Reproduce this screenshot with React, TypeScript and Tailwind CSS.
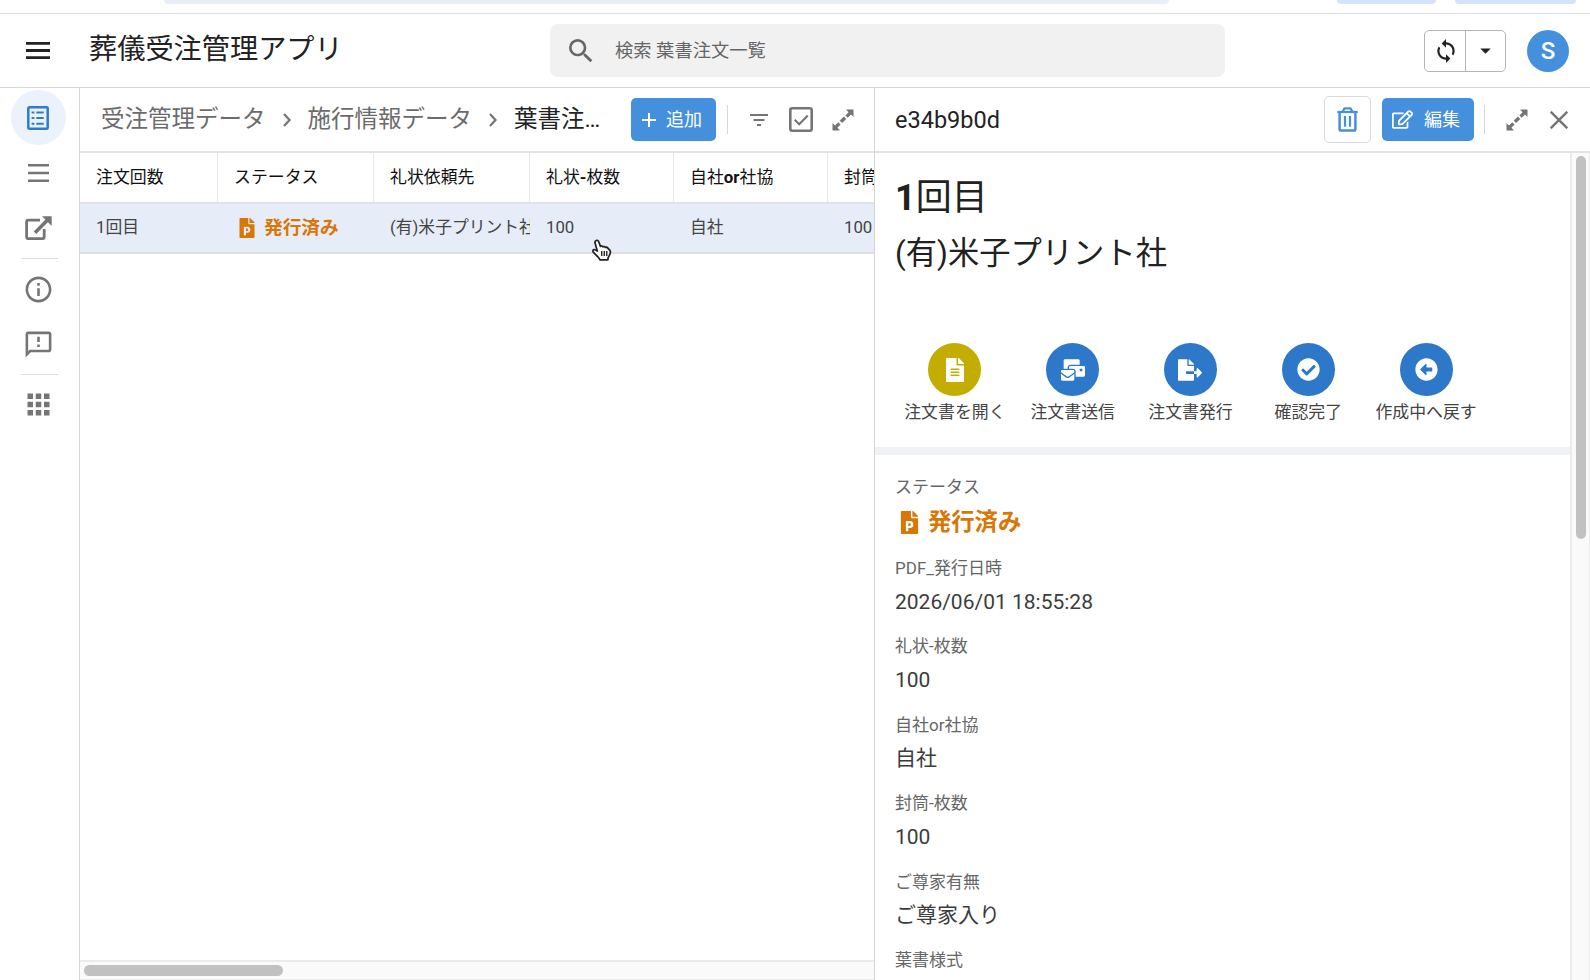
import type { ReactNode } from 'react';
import { FaFilePowerpoint, FaFileAlt, FaMailBulk, FaFileExport, FaCheckCircle, FaArrowAltCircleLeft, FaRegEdit } from 'react-icons/fa';
import { MdSearch, MdSync, MdArrowDropDown, MdInfoOutline, MdOutlineFeedback, MdApps } from 'react-icons/md';

const COLUMNS = [
  { label: '注文回数', width: 'w-[138px]', value: '1回目' },
  { label: 'ステータス', width: 'w-[156px]', value: '発行済み', status: true },
  { label: '礼状依頼先', width: 'w-[156px]', value: '(有)米子プリント社' },
  { label: '礼状-枚数', width: 'w-[144px]', value: '100' },
  { label: '自社or社協', width: 'w-[154px]', value: '自社' },
  { label: '封筒-枚数', width: 'w-[156px]', value: '100' },
];

const ACTIONS = [
  { label: '注文書を開く', icon: <FaFileAlt size={24} />, color: 'bg-[#c3ad00]' },
  { label: '注文書送信', icon: <FaMailBulk size={24} />, color: 'bg-[#2d78c8]' },
  { label: '注文書発行', icon: <FaFileExport size={24} />, color: 'bg-[#2d78c8]' },
  { label: '確認完了', icon: <FaCheckCircle size={23} />, color: 'bg-[#2d78c8]' },
  { label: '作成中へ戻す', icon: <FaArrowAltCircleLeft size={23} />, color: 'bg-[#2d78c8]' },
];

const FIELDS = [
  { label: 'PDF_発行日時', value: '2026/06/01 18:55:28' },
  { label: '礼状-枚数', value: '100' },
  { label: '自社or社協', value: '自社' },
  { label: '封筒-枚数', value: '100' },
  { label: 'ご尊家有無', value: 'ご尊家入り' },
  { label: '葉書様式', value: '' },
];

// Only the latin part of a label is set in bold
function MixedWeight({ text }: { text: string }) {
  return (
    <>
      {text.split(/([\x20-\x7e]+)/).map((part, i) =>
        i % 2 ? <span key={i} className="font-bold">{part}</span> : part
      )}
    </>
  );
}

function MenuIcon({ width, height, stroke }: { width: number; height: number; stroke: number }) {
  const half = stroke / 2;
  return (
    <svg width={width} height={height} stroke="currentColor" strokeWidth={stroke}>
      <path d={`M0 ${half}H${width}M0 ${height / 2}H${width}M0 ${height - half}H${width}`} />
    </svg>
  );
}

function ListIcon() {
  return (
    <svg width="22" height="24" viewBox="0 0 22 24" fill="none" stroke="currentColor" strokeWidth="2">
      <rect x="1.3" y="1.3" width="19.4" height="21.4" rx="1" strokeWidth="2.5" />
      <path d="M4.6 6.5h2.8M4.6 12h2.8M4.6 17.7h2.8M9.3 6.5h7.4M9.3 12h7.4M9.3 17.7h7.4" />
    </svg>
  );
}

function ExternalIcon() {
  return (
    <svg width="27" height="24" viewBox="0 0 27 24" fill="none" stroke="currentColor">
      <path d="M15 4.2H3.2A1.6 1.6 0 0 0 1.6 5.8v15.3a1.6 1.6 0 0 0 1.6 1.6h14.4a1.6 1.6 0 0 0 1.6-1.6V13" strokeWidth="2.8" />
      <path d="M10 16.7 23.5 3" strokeWidth="3.6" />
      <path d="M17 .3h9.7V10z" fill="currentColor" stroke="none" />
    </svg>
  );
}

function ExpandIcon() {
  return (
    <svg width="22" height="22" viewBox="0 0 22 22" fill="currentColor">
      <path d="M14 .5h7.500v7.500l-2.500-2.500-3.300 3.300-2.300-2.300 3.200-3.200zM8 21.500H.5V14L3 16.500l3.300-3.300 2.300 2.300-3.200 3.200zM11.900 7.500l2.400 2.400-4.200 4.200-2.400-2.400z" />
    </svg>
  );
}

function CheckboxIcon() {
  return (
    <svg width="24" height="25" viewBox="0 0 24 25" fill="none" stroke="currentColor">
      <rect x="1.300" y="1.300" width="21.400" height="22.400" rx="2" strokeWidth="2.600" />
      <path d="m5.700 12.700 4.500 4.500 8.600-8.700" strokeWidth="2.200" />
    </svg>
  );
}

function TrashIcon() {
  return (
    <svg width="21" height="25" viewBox="0 0 21 25" fill="none" stroke="currentColor">
      <path d="M.3 5h20.400" strokeWidth="2.200" />
      <path d="M5.800 4.500 7.500 1.300h6l1.700 3.200" strokeWidth="2.300" strokeLinejoin="round" />
      <path d="M2.600 5v17a1.600 1.600 0 0 0 1.600 1.600h12.600a1.600 1.600 0 0 0 1.600-1.600V5" strokeWidth="2.500" />
      <path d="M8 9v10.800M13 9v10.800" strokeWidth="2.200" />
    </svg>
  );
}

function HandCursor() {
  return (
    <svg className="absolute left-[592px] top-[239px]" width="20" height="22" viewBox="0 0 21 24">
      <path
        d="M4.200 1.600c1.200-.5 2.300 0 2.700 1.200l1.900 5.300c.7-.8 2.300-.6 2.800.4.900-.6 2.200-.3 2.700.7 1.200-.4 2.500.1 3 1.300.3.800.8.9 1.500 1.300.9.700 1 1.700.7 3.200-.5 2.200-1.300 4-2.300 5.200l-.3 2.600H8.200c-.4-1.600-1.500-2.600-2.700-3.800L1 14.300c-.8-1-.5-2.300.6-2.700 1.100-.3 2.400.5 3.800 1.500L2.900 4.300c-.3-1.100.2-2.200 1.300-2.700z"
        fill="#fff"
        stroke="#222"
        strokeWidth="1.900"
        strokeLinejoin="round"
      />
      <path d="M10.200 13v5.500M13 13v5.500M15.700 13v5.500" stroke="#222" strokeWidth="1.500" />
    </svg>
  );
}

function BrowserEdge() {
  return (
    <div className="flex h-[14px] shrink-0 items-start border-b border-[#dcdcdc] pl-[164px]">
      <div className="h-[4px] w-[1005px] rounded-b-[14px] bg-[#e9eff9]" />
      <div className="ml-[168px] h-[4px] w-[99px] rounded-b-[14px] bg-[#d5e2fb]" />
      <div className="ml-[19px] h-[4px] w-[121px] rounded-b-[14px] bg-[#d5e2fb]" />
    </div>
  );
}

function AppHeader() {
  return (
    <header className="flex h-[74px] shrink-0 items-center border-b border-[#d8d8d8] pl-[26px] pr-[21px] text-[#222]">
      <MenuIcon width={24} height={17} stroke={2.8} />
      <h1 className="ml-[39px] w-[461px] text-[28.2px] font-normal leading-none">葬儀受注管理アプリ</h1>
      <div className="flex h-[53px] w-[675px] items-center rounded-lg bg-[#f1f1f1] pl-[15px] text-[#666]">
        <MdSearch size={32} />
        <span className="ml-[18px] text-[18.300px]">検索 葉書注文一覧</span>
      </div>
      <div className="ml-auto flex h-[42px] w-[82px] rounded-[5px] border border-[#b5b5b5]">
        <div className="flex flex-1 items-center justify-center border-r border-[#b5b5b5] pl-px">
          <MdSync size={26} />
        </div>
        <div className="flex flex-1 items-center justify-center">
          <MdArrowDropDown size={25} />
        </div>
      </div>
      <div className="ml-[21px] flex size-[42px] items-center justify-center rounded-full bg-[#4590dd] text-[24px] font-medium text-white">S</div>
    </header>
  );
}

function NavItem({ children, active }: { children: ReactNode; active?: boolean }) {
  return (
    <div className={`flex size-[55px] items-center justify-center rounded-full ${active ? 'bg-[#ecf2fc] text-[#2d7bd0]' : 'text-[#757575]'}`}>
      {children}
    </div>
  );
}

function Sidebar() {
  return (
    <nav className="flex w-[80px] shrink-0 flex-col items-center border-r border-[#d8d8d8] pr-[3px] pt-[2px]">
      <NavItem active><ListIcon /></NavItem>
      <NavItem><MenuIcon width={21} height={18} stroke={2.4} /></NavItem>
      <NavItem><ExternalIcon /></NavItem>
      <div className="my-[3px] ml-[2px] h-px w-[37px] bg-[#dcdcdc]" />
      <NavItem><MdInfoOutline size={31} /></NavItem>
      <NavItem><MdOutlineFeedback size={31} /></NavItem>
      <div className="my-[2px] ml-[2px] h-px w-[37px] bg-[#dcdcdc]" />
      <NavItem><MdApps size={33} /></NavItem>
    </nav>
  );
}

function Chevron() {
  return (
    <svg width="8" height="14" viewBox="0 0 8 14" fill="none" stroke="#757575" strokeWidth="2.200">
      <path d="m1 1 5.500 6L1 13" />
    </svg>
  );
}

function ListPanel() {
  return (
    <section className="flex w-[794px] shrink-0 flex-col overflow-hidden">
      <div className="flex h-[65px] shrink-0 items-center border-b-2 border-[#e2e3e5] pl-[21px] text-[23.500px] text-[#6b6b6b]">
        <span className="whitespace-nowrap">受注管理データ</span>
        <span className="ml-[17px]"><Chevron /></span>
        <span className="ml-[17px] whitespace-nowrap">施行情報データ</span>
        <span className="ml-[17px]"><Chevron /></span>
        <span className="ml-[17px] w-[90px] shrink-0 truncate text-[#222]">葉書注文一覧</span>
        <button className="ml-[27px] flex h-[43px] w-[85px] shrink-0 items-center rounded-[5px] bg-[#4590dd] pl-[11px] text-[18px] text-white">
          <svg width="14" height="14" stroke="currentColor" strokeWidth="2"><path d="M7 0v14M0 7h14" /></svg>
          <span className="ml-[10px]">追加</span>
        </button>
        <div className="ml-[11px] h-[29px] w-px bg-[#d8d8d8]" />
        <svg className="ml-[22px]" width="18" height="12" stroke="#757575" strokeWidth="2"><path d="M0 1h18M3.500 6h11M7 11h4" /></svg>
        <div className="ml-[21px] text-[#757575]"><CheckboxIcon /></div>
        <div className="ml-[19px] text-[#757575]"><ExpandIcon /></div>
      </div>
      <div className="flex h-[51px] shrink-0 border-b-2 border-[#dfe1e4] text-[16.9px] text-[#111]">
        {COLUMNS.map((col) => (
          <div key={col.label} className={`flex shrink-0 items-center border-r border-[#e6e6e6] pl-4 ${col.width}`}>
            <span className="whitespace-nowrap"><MixedWeight text={col.label} /></span>
          </div>
        ))}
      </div>
      <div className="flex h-[50px] shrink-0 border-b-2 border-[#dbdde2] bg-[#e6edf8] text-[16.8px] text-[#444]">
        {COLUMNS.map((col) => (
          <div key={col.label} className={`flex shrink-0 items-center overflow-hidden whitespace-nowrap pl-4 ${col.width}`}>
            {col.status ? (
              <span className="flex items-center pl-[3px] text-[18.700px] font-bold text-[#d97706]">
                <FaFilePowerpoint size={20} />
                <span className="ml-[7px]">{col.value}</span>
              </span>
            ) : (
              col.value
            )}
          </div>
        ))}
      </div>
      <div className="flex-1" />
      <div className="flex h-[20px] shrink-0 items-center border-b border-t-2 border-[#ebebeb] bg-[#fafafa] pl-1">
        <div className="h-[11px] w-[199px] rounded-full bg-[#c1c1c1]" />
      </div>
    </section>
  );
}

function DetailPanel() {
  return (
    <section className="flex flex-1 flex-col overflow-hidden border-l border-[#d5d5d5]">
      <div className="flex h-[65px] shrink-0 items-center border-b-2 border-[#e2e3e5] pl-[20px] pr-[22px]">
        <span className="pt-[2px] text-[23.500px] text-[#222]">e34b9b0d</span>
        <button className="ml-auto flex h-[47px] w-[47px] items-center justify-center rounded-[5px] border border-[#d8dade] text-[#4590dd]">
          <TrashIcon />
        </button>
        <button className="ml-[11px] flex h-[43px] w-[92px] items-center rounded-[5px] bg-[#4590dd] pl-[10px] text-[18px] text-white">
          <FaRegEdit size={21} />
          <span className="ml-[11px]">編集</span>
        </button>
        <div className="ml-[10px] h-[29px] w-px bg-[#d8d8d8]" />
        <div className="ml-[21px] text-[#757575]"><ExpandIcon /></div>
        <svg className="ml-[22px]" width="18" height="18" stroke="#757575" strokeWidth="2.400"><path d="m.7.7 16.600 16.600M17.300.7.7 17.300" /></svg>
      </div>
      <div className="flex min-h-0 flex-1">
        <div className="flex-1 overflow-hidden">
          <div className="h-[294px] pl-[20px] pt-[23px] text-[#212121]">
            <h2 className="text-[36px] leading-[44px]"><MixedWeight text="1回目" /></h2>
            <p className="mt-[12px] text-[31.300px] leading-[44px]">(有)米子プリント社</p>
            <div className="mt-[67px] flex pl-px">
              {ACTIONS.map((a) => (
                <div key={a.label} className="flex w-[117.800px] flex-col items-center">
                  <div className={`flex size-[53px] items-center justify-center rounded-full text-white ${a.color}`}>{a.icon}</div>
                  <span className="mt-[4px] whitespace-nowrap text-[16.900px] leading-6 text-[#444]">{a.label}</span>
                </div>
              ))}
            </div>
          </div>
          <div className="h-2 bg-[#f1f2f4]" />
          <div className="pl-[20px] pt-[20px]">
            <div className="h-[81px]">
              <div className="text-[17px] leading-6 text-[#666]">ステータス</div>
              <div className="mt-[7px] flex items-center pl-[3px] text-[23.300px] font-bold leading-8 text-[#d97706]">
                <FaFilePowerpoint size={23} />
                <span className="ml-[7px]">発行済み</span>
              </div>
            </div>
            {FIELDS.map((f) => (
              <div key={f.label} className="h-[78.400px]">
                <div className="text-[17px] leading-6 text-[#666]">{f.label}</div>
                <div className="mt-[7.500px] text-[21px] leading-7 text-[#3c3c3c]">{f.value}</div>
              </div>
            ))}
          </div>
        </div>
        <div className="flex w-[20px] shrink-0 justify-center border-l-2 border-r border-[#ebebeb] bg-[#fafafa] pl-px pt-[3px]">
          <div className="h-[383px] w-[10px] rounded-full bg-[#c1c1c1]" />
        </div>
      </div>
    </section>
  );
}

export default function App() {
  return (
    <div lang="ja" className="relative flex h-[980px] w-[1590px] flex-col overflow-hidden bg-white font-[Roboto,'Noto_Sans_CJK_JP',sans-serif]">
      <BrowserEdge />
      <AppHeader />
      <div className="flex min-h-0 flex-1">
        <Sidebar />
        <ListPanel />
        <DetailPanel />
      </div>
      <HandCursor />
    </div>
  );
}
